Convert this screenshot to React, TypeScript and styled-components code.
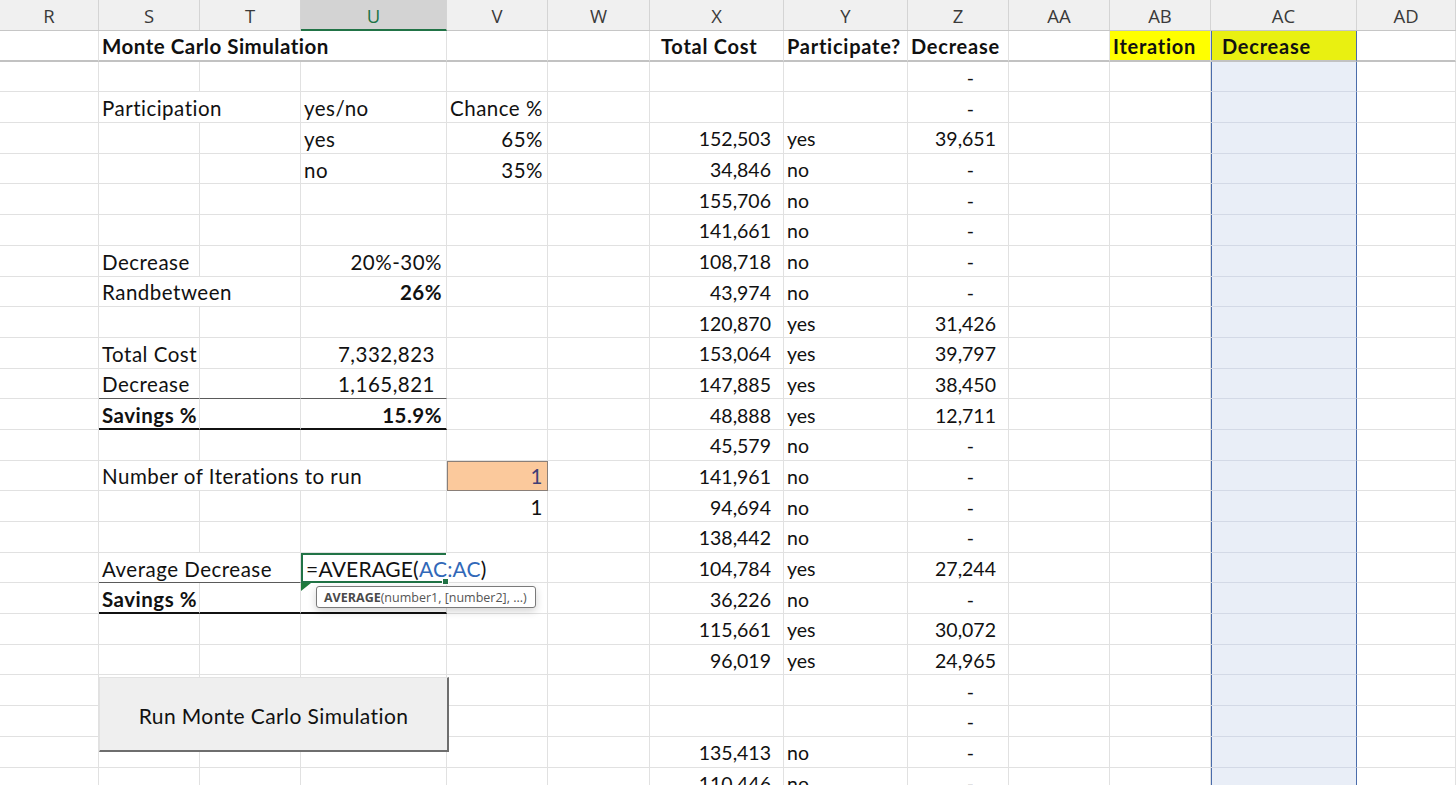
import React, { ReactNode } from "react";
import styled, { createGlobalStyle, css } from "styled-components";

const GlobalStyle = createGlobalStyle`
  html, body {
    margin: 0;
    padding: 0;
    background: #ffffff;
    overflow: hidden;
  }
  body {
    font-family: Lato, "Open Sans", "Liberation Sans", sans-serif;
    color: #111;
  }
`;

const COLS: [string, number][] = [
  ["R", 99],
  ["S", 101],
  ["T", 101],
  ["U", 146],
  ["V", 101],
  ["W", 102],
  ["X", 134],
  ["Y", 124],
  ["Z", 101],
  ["AA", 101],
  ["AB", 101],
  ["AC", 146],
  ["AD", 99],
];

// the model block on the left is drawn a touch wider than the data table
const LEFT_BLOCK = ["R", "S", "T", "U", "V"];

const TEMPLATE = COLS.map(([, w]) => `${w}px`).join(" ");
const ROW_H = 30.7;

type CellSpec = {
  text?: ReactNode;
  align?: "left" | "right";
  bold?: boolean;
  span?: number;
  pad?: number;
  fill?: string;
  color?: string;
  bottom?: string;
  boxed?: boolean;
  edit?: boolean;
  flag?: boolean;
};

type RowSpec = Record<string, CellSpec>;

const dash: CellSpec = { text: "-", align: "right", pad: 34 };
const num = (text: string, pad = 12): CellSpec => ({ text, align: "right", pad });

const cost = (x: string, y: string, z?: string): RowSpec => ({
  X: num(x),
  Y: { text: y },
  Z: z ? num(z) : dash,
});

const thin = "1px solid #5a5a5a";
const thick = "2px solid #111";

const Formula = () => (
  <>
    =AVERA
    <Caret />
    GE(<Ref>AC:AC</Ref>)
  </>
);

const ROWS: RowSpec[] = [
  {
    S: { text: "Monte Carlo Simulation", bold: true, span: 3 },
    X: { text: "Total Cost", bold: true, pad: 11 },
    Y: { text: "Participate?", bold: true },
    Z: { text: "Decrease", bold: true },
    AB: { text: "Iteration", bold: true, fill: "#ffff00" },
    AC: { text: "Decrease", bold: true, fill: "#e9f011", pad: 11 },
  },
  { Z: dash },
  {
    S: { text: "Participation", span: 2 },
    U: { text: "yes/no" },
    V: { text: "Chance %" },
    Z: dash,
  },
  { U: { text: "yes" }, V: num("65%", 4), ...cost("152,503", "yes", "39,651") },
  { U: { text: "no" }, V: num("35%", 4), ...cost("34,846", "no") },
  cost("155,706", "no"),
  cost("141,661", "no"),
  { S: { text: "Decrease" }, U: num("20%-30%", 4), ...cost("108,718", "no") },
  {
    S: { text: "Randbetween", span: 2 },
    U: { ...num("26%", 4), bold: true },
    ...cost("43,974", "no"),
  },
  cost("120,870", "yes", "31,426"),
  { S: { text: "Total Cost" }, U: num("7,332,823", 11), ...cost("153,064", "yes", "39,797") },
  {
    S: { text: "Decrease", bottom: thin },
    T: { bottom: thin },
    U: { ...num("1,165,821", 11), bottom: thin },
    ...cost("147,885", "yes", "38,450"),
  },
  {
    S: { text: "Savings %", bold: true, bottom: thick },
    T: { bottom: thick },
    U: { ...num("15.9%", 4), bold: true, bottom: thick },
    ...cost("48,888", "yes", "12,711"),
  },
  cost("45,579", "no"),
  {
    S: { text: "Number of Iterations to run", span: 3 },
    V: { ...num("1", 4), fill: "#fbc99c", color: "#3f3f76", boxed: true },
    ...cost("141,961", "no"),
  },
  { V: num("1", 4), ...cost("94,694", "no") },
  cost("138,442", "no"),
  {
    S: { text: "Average Decrease", span: 2, bottom: thin },
    U: { text: <Formula />, edit: true },
    ...cost("104,784", "yes", "27,244"),
  },
  {
    S: { text: "Savings %", bold: true, bottom: thick },
    T: { bottom: thick },
    U: { flag: true, bottom: thick },
    ...cost("36,226", "no"),
  },
  cost("115,661", "yes", "30,072"),
  cost("96,019", "yes", "24,965"),
  { Z: dash },
  { Z: dash },
  cost("135,413", "no"),
  cost("110,446", "no"),
];

export default function App() {
  return (
    <>
      <GlobalStyle />
      <Sheet>
        <HeaderRow>
          {COLS.map(([name]) => (
            <ColHead key={name} $active={name === "U"}>
              {name}
            </ColHead>
          ))}
        </HeaderRow>
        <Grid>
          {ROWS.map((row, r) => {
            const cells: ReactNode[] = [];
            let skip = 0;
            COLS.forEach(([name]) => {
              if (skip > 0) {
                skip--;
                return;
              }
              const spec = row[name] || {};
              const span = spec.span || 1;
              skip = span - 1;
              cells.push(
                <Cell
                  key={`${r}-${name}`}
                  $span={span}
                  $align={spec.align || "left"}
                  $bold={!!spec.bold}
                  $wide={LEFT_BLOCK.includes(name)}
                  $pad={spec.pad}
                  $fill={spec.fill}
                  $color={spec.color}
                  $bottom={spec.bottom}
                  $boxed={!!spec.boxed}
                  $edit={!!spec.edit}
                  $flag={!!spec.flag}
                  $range={name === "AC"}
                  $firstRow={r === 0}
                >
                  {spec.text}
                </Cell>
              );
            });
            return cells;
          })}
        </Grid>

        <Tooltip>
          <b>AVERAGE</b>(number1, [number2], ...)
        </Tooltip>

        <MacroButton>Run Monte Carlo Simulation</MacroButton>
      </Sheet>
    </>
  );
}

const Sheet = styled.div`
  position: relative;
  width: 1456px;
  height: 785px;
  overflow: hidden;
  background: #fff;
`;

const HeaderRow = styled.div`
  display: grid;
  grid-template-columns: ${TEMPLATE};
  height: 31px;
  background: #f0f0f0;
  border-bottom: 1px solid #c6c6c6;
  box-sizing: border-box;
`;

const ColHead = styled.div<{ $active: boolean }>`
  display: flex;
  align-items: center;
  justify-content: center;
  padding-top: 1px;
  box-sizing: border-box;
  border-right: 1px solid #d4d4d4;
  font-family: "Open Sans", "Noto Sans", sans-serif;
  font-size: 18.5px;
  color: #3a3a3a;
  ${({ $active }) =>
    $active &&
    css`
      background: #d3d3d3;
      color: #217346;
      border-bottom: 2px solid #217346;
      margin-bottom: -1px;
    `}
`;

const Grid = styled.div`
  display: grid;
  grid-template-columns: ${TEMPLATE};
  grid-auto-rows: ${ROW_H}px;
`;

type CellProps = {
  $span: number;
  $align: "left" | "right";
  $bold: boolean;
  $wide: boolean;
  $pad?: number;
  $fill?: string;
  $color?: string;
  $bottom?: string;
  $boxed: boolean;
  $edit: boolean;
  $flag: boolean;
  $range: boolean;
  $firstRow: boolean;
};

const Cell = styled.div<CellProps>`
  position: relative;
  grid-column: span ${({ $span }) => $span};
  display: flex;
  align-items: center;
  justify-content: ${({ $align }) => ($align === "right" ? "flex-end" : "flex-start")};
  box-sizing: border-box;
  padding: 2px 0 0 0;
  ${({ $align, $pad }) =>
    $align === "right"
      ? css`
          padding-right: ${$pad ?? 4}px;
        `
      : css`
          padding-left: ${$pad ?? 3}px;
        `}
  white-space: nowrap;
  font-size: 19.5px;
  font-weight: ${({ $bold }) => ($bold ? 700 : 400)};
  ${({ $wide, $bold }) =>
    $wide
      ? css`
          font-size: 20.5px;
          letter-spacing: 0.5px;
        `
      : $bold &&
        css`
          font-size: 20px;
          letter-spacing: 0.75px;
        `}
  color: ${({ $color }) => $color || "#111"};
  background: ${({ $fill, $range, $firstRow }) =>
    $fill || ($range && !$firstRow ? "#e9eef7" : "transparent")};
  border-right: 1px solid ${({ $range }) => ($range ? "#4a6cab" : "#e1e1e1")};
  border-bottom: ${({ $bottom, $range, $firstRow }) =>
    $firstRow
      ? "2px solid #c2c2c2"
      : $bottom || `1px solid ${$range ? "#d3d9e6" : "#e1e1e1"}`};
  ${({ $range }) =>
    $range &&
    css`
      box-shadow: inset 1px 0 0 #4a6cab;
    `}
  ${({ $boxed }) =>
    $boxed &&
    css`
      outline: 1px solid #8a7f78;
      outline-offset: -1px;
    `}
  ${({ $edit }) =>
    $edit &&
    css`
      overflow: visible;
      z-index: 2;
      border-right-color: #fff;
      border-bottom: 2px solid #217346;
      box-shadow: inset 2px 0 0 #217346, inset 0 2px 0 #217346;
      padding-left: 5px;
      font-size: 21px;
      letter-spacing: 0.2px;
      &::after {
        content: "";
        position: absolute;
        right: -3px;
        bottom: -4px;
        width: 5px;
        height: 5px;
        background: #217346;
        border: 1px solid #fff;
      }
    `}
  ${({ $flag }) =>
    $flag &&
    css`
      &::before {
        content: "";
        position: absolute;
        left: 0;
        top: 0;
        border-top: 8px solid #1e7a3c;
        border-right: 10px solid transparent;
      }
    `}
`;

const Caret = styled.span`
  display: inline-block;
  width: 1px;
  height: 28px;
  margin: 0 -1px -4px 0;
  background: #555;
`;

const Ref = styled.span`
  color: #3168b8;
`;

const Tooltip = styled.div`
  position: absolute;
  left: 316px;
  top: 586px;
  height: 22px;
  padding: 0 8px 0 7px;
  display: flex;
  align-items: center;
  box-sizing: border-box;
  background: #fff;
  border: 1px solid #7a7a7a;
  border-radius: 3px;
  box-shadow: 0 3px 8px rgba(0, 0, 0, 0.18);
  font-family: "Open Sans", "Noto Sans", sans-serif;
  font-size: 12.5px;
  color: #555;
  white-space: nowrap;
  z-index: 3;
  b {
    font-weight: 700;
    color: #4a4a4a;
  }
`;

const MacroButton = styled.div`
  position: absolute;
  left: 99px;
  top: 677px;
  width: 350px;
  height: 75px;
  box-sizing: border-box;
  display: flex;
  align-items: center;
  justify-content: center;
  padding-top: 3px;
  background: #efefef;
  border-top: 1px solid #e2e2e2;
  border-left: 1px solid #e2e2e2;
  border-right: 2px solid #6e6e6e;
  border-bottom: 2px solid #6e6e6e;
  font-size: 21px;
  letter-spacing: 0.4px;
  color: #111;
  z-index: 2;
`;
